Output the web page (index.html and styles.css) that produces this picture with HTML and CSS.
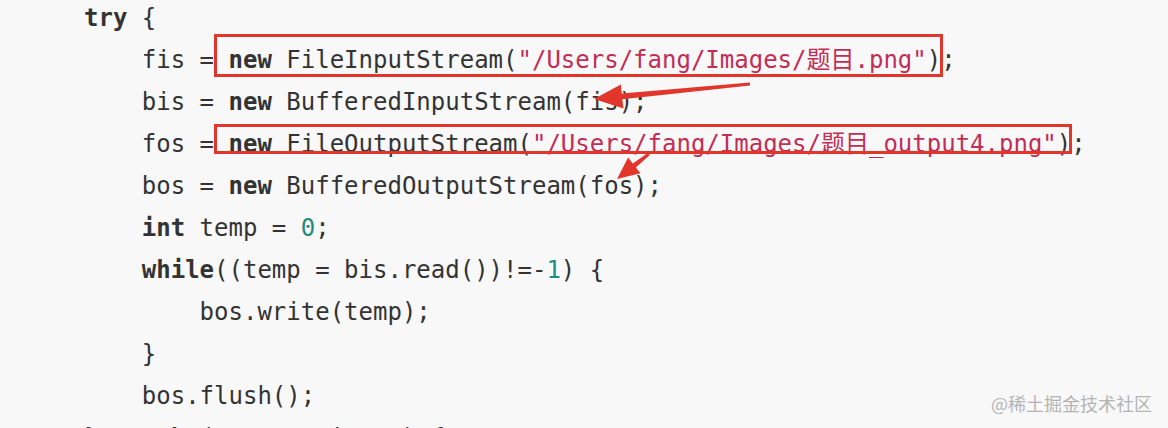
FILE: index.html
```html
<!DOCTYPE html>
<html lang="zh">
<head>
<meta charset="utf-8">
<title>code</title>
<link rel="stylesheet" href="styles.css">
</head>
<body>
<div class="shot">
<pre class="code"><span class="kw">try</span> {
    fis = <span class="kw">new</span> FileInputStream(<span class="str">"/Users/fang/Images/题目.png"</span>);
    bis = <span class="kw">new</span> BufferedInputStream(fis);
    fos = <span class="kw">new</span> FileOutputStream(<span class="str">"/Users/fang/Images/题目_output4.png"</span>);
    bos = <span class="kw">new</span> BufferedOutputStream(fos);
    <span class="kw">int</span> temp = <span class="num">0</span>;
    <span class="kw">while</span>((temp = bis.read())!=-<span class="num">1</span>) {
        bos.write(temp);
    }
    bos.flush();
} <span class="kw">catch</span> (IOException e) {</pre>
<div class="mark mark-1"></div>
<div class="mark mark-2"></div>
<svg class="arrows" width="1168" height="428" viewBox="0 0 1168 428" xmlns="http://www.w3.org/2000/svg">
  <polygon fill="#e2352b" points="594,99 620.8,84.4 621.8,93.4 750,82.6 750,85.4 622.3,99.2 623.5,108.4"/>
  <polygon fill="#e2352b" points="617,179 628.1,157.5 632.8,163.4 648.2,152.8 649.8,155 635.8,167.4 640.5,173.3"/>
</svg>
<div class="watermark">@稀土掘金技术社区</div>
</div>
</body>
</html>
```
FILE: styles.css
```css
html, body {
  margin: 0;
  padding: 0;
  background: #f8f8f8;
}
.shot {
  position: relative;
  width: 1168px;
  height: 428px;
  overflow: hidden;
  background: #f8f8f8;
}
.code {
  margin: -3px 0 0 0;
  padding: 0 0 0 84px;
  font-family: "DejaVu Sans Mono", "Noto Sans CJK SC", monospace;
  font-size: 24px;
  line-height: 42px;
  color: #333333;
  white-space: pre;
}
.kw {
  font-weight: bold;
}
.str {
  color: #c22d55;
}
.num {
  color: #1f8c82;
}
.mark {
  position: absolute;
  border: 3px solid #e2352b;
  box-sizing: border-box;
}
.mark-1 {
  left: 214px;
  top: 34px;
  width: 729px;
  height: 43px;
}
.mark-2 {
  left: 214px;
  top: 124px;
  width: 858px;
  height: 30px;
}
.arrows {
  position: absolute;
  left: 0;
  top: 0;
}
.watermark {
  position: absolute;
  right: 16px;
  top: 391px;
  font-family: "Noto Sans CJK SC", sans-serif;
  font-size: 18px;
  line-height: 24px;
  color: #b4b4b4;
}
```
